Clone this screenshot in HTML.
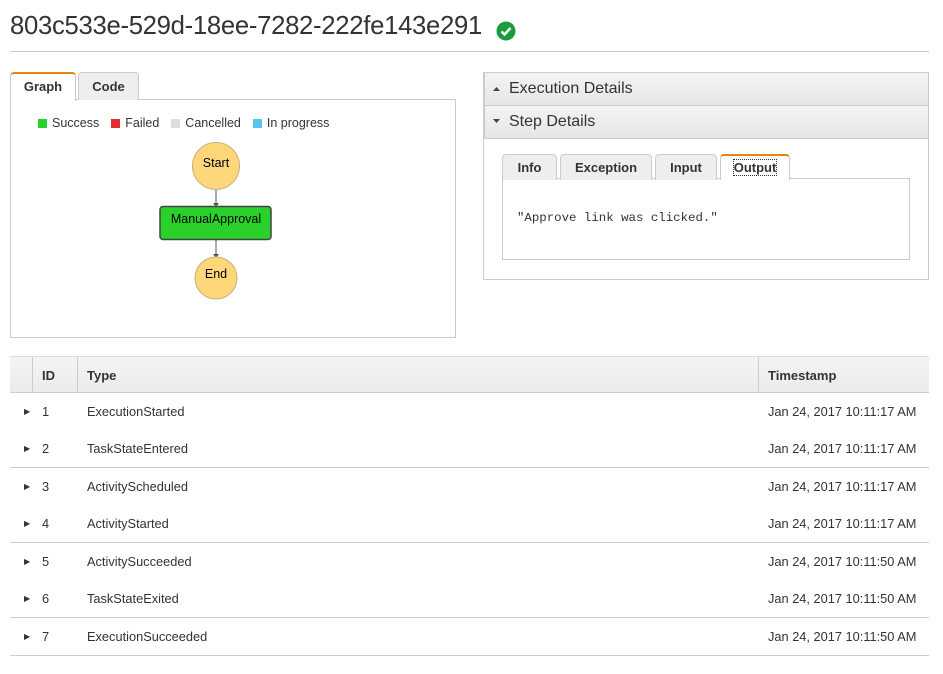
<!DOCTYPE html><html><head><style>
*{box-sizing:border-box}body{margin:0;width:943px;height:674px;background:#fff;font-family:"Liberation Sans",sans-serif;color:#333;position:relative;overflow:hidden}
.a{position:absolute}
h1{position:absolute;left:10px;top:12px;margin:0;font-weight:normal;font-size:25.7px;color:#333;letter-spacing:-0.3px}
.tab{position:absolute;height:28px;border:1px solid #ccc;border-bottom:none;border-radius:4px 4px 0 0;background:#eee;font-weight:bold;font-size:13px;text-align:center;line-height:26px;color:#333}
.tab.on{background:#fff;border-top:2px solid #e8850c;height:29px}
.sq{display:inline-block;width:9px;height:9px;margin-right:5px;vertical-align:-1px}
.bar{position:absolute;left:484px;width:445px;height:34px;background:linear-gradient(#f4f4f4,#e6e6e6);border:1px solid #ccc;font-size:16px;line-height:32px;padding-left:24px;color:#333}
.row{position:absolute;left:10px;width:919px;height:37.5px;font-size:12.8px;line-height:37px}
.row span{position:absolute}
</style></head><body>
<h1>803c533e-529d-18ee-7282-222fe143e291</h1>
<svg class="a" style="left:496px;top:21px" width="20" height="20"><circle cx="10" cy="10" r="9.5" fill="#1a9c3e"/><path d="M5.5 10.5l3 3 6-6.5" stroke="#fff" stroke-width="2.5" fill="none"/></svg>
<div class="a" style="left:10px;top:51px;width:919px;height:1px;background:#ccc"></div>
<div class="a" style="left:10px;top:99px;width:446px;height:239px;border:1px solid #ccc"></div>
<div class="tab on" style="left:10px;top:72px;width:66px">Graph</div>
<div class="tab" style="left:78px;top:72px;width:61px;height:28px;line-height:28px">Code</div>
<div class="a" style="left:38px;top:116px;font-size:12.5px;white-space:nowrap"><span class="sq" style="background:#2bd12b"></span>Success<span class="sq" style="background:#e03030;margin-left:12px"></span>Failed<span class="sq" style="background:#ddd;margin-left:12px"></span>Cancelled<span class="sq" style="background:#55c5ec;margin-left:12px"></span>In progress</div>
<svg class="a" style="left:150px;top:140px" width="140" height="165" font-family="Liberation Sans" font-size="12.5">
<circle cx="66" cy="26" r="23.5" fill="#fdd77a" stroke="#c9b07a"/><text x="66" y="27" text-anchor="middle">Start</text>
<line x1="66" y1="50" x2="66" y2="66" stroke="#555"/><path d="M63 63l3 4 3-4z" fill="#555"/>
<rect x="10" y="66.5" width="111" height="33" rx="3" fill="#2bd12b" stroke="#444" stroke-width="1.5"/><text x="66" y="83" text-anchor="middle">ManualApproval</text>
<line x1="66" y1="100" x2="66" y2="117" stroke="#555"/><path d="M63 114l3 4 3-4z" fill="#555"/>
<circle cx="66" cy="138" r="21" fill="#fdd77a" stroke="#c9b07a"/><text x="66" y="138" text-anchor="middle">End</text></svg>
<div class="a" style="left:483px;top:72px;width:446px;height:208px;border:1px solid #ccc"></div>
<div class="bar" style="top:72px">Execution Details</div>
<div class="bar" style="top:105px">Step Details</div>
<svg class="a" style="left:492px;top:86px" width="10" height="40"><path d="M1 5h7l-3.5-4z" fill="#444"/><path d="M1 33h7l-3.5 4z" fill="#444"/></svg>
<div class="a" style="left:502px;top:178px;width:408px;height:82px;border:1px solid #ccc"></div>
<div class="tab" style="left:502px;top:154px;width:55px;height:26px;line-height:26px">Info</div>
<div class="tab" style="left:560px;top:154px;width:92px;height:26px;line-height:26px">Exception</div>
<div class="tab" style="left:655px;top:154px;width:62px;height:26px;line-height:26px">Input</div>
<div class="tab on" style="left:720px;top:154px;width:70px;height:26px;line-height:24px;background:#fff"><span style="outline:1px dotted #333">Output</span></div>
<div class="a" style="left:517px;top:211px;font-family:'Liberation Mono',monospace;font-size:12.4px">"Approve link was clicked."</div>
<div class="a" style="left:10px;top:356px;width:919px;height:37px;background:linear-gradient(#f4f4f4,#ebebeb);border-top:1px solid #ddd;border-bottom:1px solid #ccc;font-weight:bold;font-size:13px;line-height:37px">
<div class="a" style="left:22px;top:0;width:1px;height:36px;background:#ccc"></div><span class="a" style="left:32px">ID</span>
<div class="a" style="left:67px;top:0;width:1px;height:36px;background:#ccc"></div><span class="a" style="left:77px">Type</span>
<div class="a" style="left:748px;top:0;width:1px;height:36px;background:#ccc"></div><span class="a" style="left:758px">Timestamp</span></div>
<div class="row" style="top:393px"><span style="left:14px;font-size:8px">▶</span><span style="left:32px">1</span><span style="left:77px">ExecutionStarted</span><span style="left:758px">Jan 24, 2017 10:11:17 AM</span></div>
<div class="row" style="top:430px;border-bottom:1px solid #ccc"><span style="left:14px;font-size:8px">▶</span><span style="left:32px">2</span><span style="left:77px">TaskStateEntered</span><span style="left:758px">Jan 24, 2017 10:11:17 AM</span></div>
<div class="row" style="top:468px"><span style="left:14px;font-size:8px">▶</span><span style="left:32px">3</span><span style="left:77px">ActivityScheduled</span><span style="left:758px">Jan 24, 2017 10:11:17 AM</span></div>
<div class="row" style="top:505px;border-bottom:1px solid #ccc"><span style="left:14px;font-size:8px">▶</span><span style="left:32px">4</span><span style="left:77px">ActivityStarted</span><span style="left:758px">Jan 24, 2017 10:11:17 AM</span></div>
<div class="row" style="top:543px"><span style="left:14px;font-size:8px">▶</span><span style="left:32px">5</span><span style="left:77px">ActivitySucceeded</span><span style="left:758px">Jan 24, 2017 10:11:50 AM</span></div>
<div class="row" style="top:580px;border-bottom:1px solid #ccc"><span style="left:14px;font-size:8px">▶</span><span style="left:32px">6</span><span style="left:77px">TaskStateExited</span><span style="left:758px">Jan 24, 2017 10:11:50 AM</span></div>
<div class="row" style="top:618px;border-bottom:1px solid #ccc"><span style="left:14px;font-size:8px">▶</span><span style="left:32px">7</span><span style="left:77px">ExecutionSucceeded</span><span style="left:758px">Jan 24, 2017 10:11:50 AM</span></div>
</body></html>
